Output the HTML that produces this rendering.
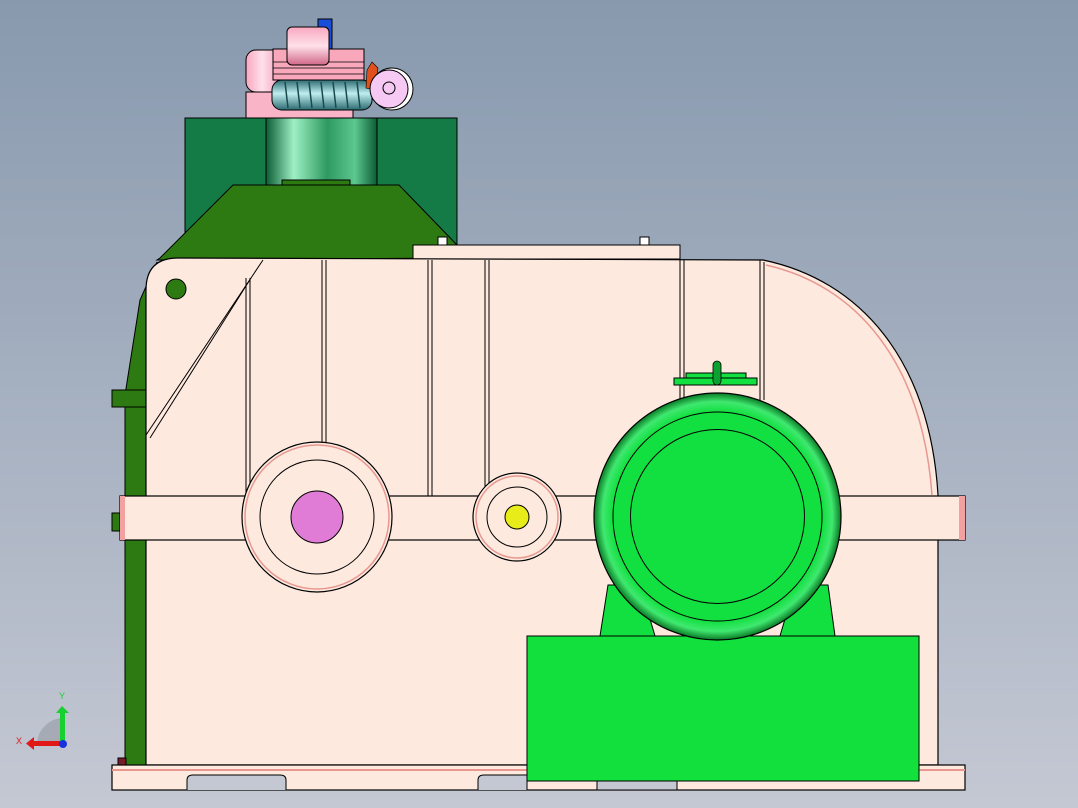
<!DOCTYPE html>
<html><head><meta charset="utf-8"><style>
html,body{margin:0;padding:0;width:1078px;height:808px;overflow:hidden}
svg{display:block}
</style></head><body>
<svg width="1078" height="808" viewBox="0 0 1078 808" xmlns="http://www.w3.org/2000/svg" font-family="Liberation Sans, sans-serif">
<defs>
<linearGradient id="bg" x1="0" y1="0" x2="0" y2="1"><stop offset="0" stop-color="#8899ae"/><stop offset="1" stop-color="#c4c8d3"/></linearGradient>
<linearGradient id="col" x1="0" y1="0" x2="1" y2="0"><stop offset="0" stop-color="#0c5c34"/><stop offset=".25" stop-color="#9ef0c4"/><stop offset=".55" stop-color="#2e9a60"/><stop offset=".8" stop-color="#5cc890"/><stop offset="1" stop-color="#0c5c34"/></linearGradient>
<radialGradient id="mot" cx=".5" cy=".5" r=".5"><stop offset=".85" stop-color="#12e040"/><stop offset=".93" stop-color="#40e870"/><stop offset="1" stop-color="#0a7a25"/></radialGradient>
<linearGradient id="pm" x1="0" y1="0" x2="0" y2="1"><stop offset="0" stop-color="#f9a8c0"/><stop offset=".5" stop-color="#ffe0ea"/><stop offset="1" stop-color="#d06888"/></linearGradient>
<linearGradient id="pmh" x1="0" y1="0" x2="1" y2="0"><stop offset="0" stop-color="#f9a8c0"/><stop offset=".4" stop-color="#ffe0ea"/><stop offset="1" stop-color="#f090b0"/></linearGradient>
<linearGradient id="worm" x1="0" y1="0" x2="0" y2="1"><stop offset="0" stop-color="#2a6a70"/><stop offset=".45" stop-color="#c0eef0"/><stop offset="1" stop-color="#2a6a70"/></linearGradient>
</defs>
<rect width="1078" height="808" fill="url(#bg)"/>

<rect x="185" y="118" width="272" height="130" fill="#147a46" stroke="#000" stroke-width="1"/>
<rect x="266" y="118" width="111" height="70" fill="url(#col)" stroke="#000" stroke-width="1"/>
<rect x="282" y="180" width="68" height="6" fill="#2e7a12" stroke="#000" stroke-width="1"/>
<polygon points="233,185 399,185 457,245 457,258 157,260 160,258" fill="#2e7a12" stroke="#000" stroke-width="1"/>

<polygon points="157,262 146,290 146,765 125,765 125,395 140,300" fill="#2e7a12" stroke="#000" stroke-width="1"/>
<rect x="112" y="390" width="34" height="17" fill="#2e7a12" stroke="#000"/>
<rect x="112" y="513" width="10" height="18" fill="#2e7a12" stroke="#000"/>

<rect x="413" y="245" width="267" height="14" fill="#fde9de" stroke="#000" stroke-width="1"/>
<rect x="438" y="237" width="9" height="8" fill="#fff" stroke="#000"/>
<rect x="640" y="237" width="9" height="8" fill="#fff" stroke="#000"/>

<path d="M146,290 Q146,258 178,258 L763,260 C860,280 930,360 938,495 L938,765 L146,765 Z" fill="#fde9de" stroke="#000" stroke-width="1.2"/>
<path d="M766,265 C855,285 922,360 932,495" fill="none" stroke="#e89890" stroke-width="1.5"/>
<g stroke="#000" stroke-width="1" fill="none">
<line x1="246" y1="278" x2="246" y2="496"/><line x1="250" y1="278" x2="250" y2="496"/>
<line x1="322" y1="260" x2="322" y2="445"/><line x1="326" y1="260" x2="326" y2="445"/>
<line x1="428" y1="260" x2="428" y2="496"/><line x1="432" y1="260" x2="432" y2="496"/>
<line x1="485" y1="260" x2="485" y2="496"/><line x1="489" y1="260" x2="489" y2="496"/>
<line x1="680" y1="260" x2="680" y2="400"/><line x1="684" y1="260" x2="684" y2="400"/>
<line x1="760" y1="260" x2="760" y2="400"/><line x1="764" y1="262" x2="764" y2="400"/>
<line x1="146" y1="435" x2="263" y2="260"/><line x1="150" y1="438" x2="251" y2="278"/>
</g>
<circle cx="176" cy="289" r="10" fill="#2e7a12" stroke="#000"/>

<rect x="120" y="496" width="845" height="44" fill="#fde9de" stroke="#000" stroke-width="1.2"/>
<rect x="120" y="496" width="5" height="44" fill="#f2a0a0"/>
<rect x="959" y="496" width="6" height="44" fill="#f2a0a0"/>

<circle cx="317" cy="517" r="75" fill="#fde9de" stroke="#000" stroke-width="1.2"/>
<circle cx="317" cy="517" r="72" fill="none" stroke="#e89890" stroke-width="1.5"/>
<circle cx="317" cy="517" r="57" fill="none" stroke="#000"/>
<circle cx="317" cy="517" r="26" fill="#e07bd6" stroke="#000"/>
<circle cx="517" cy="517" r="44" fill="#fde9de" stroke="#000" stroke-width="1.2"/>
<circle cx="517" cy="517" r="41" fill="none" stroke="#e89890" stroke-width="1.5"/>
<circle cx="517" cy="517" r="30" fill="none" stroke="#000"/>
<circle cx="517" cy="517" r="12" fill="#e8ec18" stroke="#000"/>

<rect x="112" y="765" width="853" height="25" fill="#fde9de" stroke="#000" stroke-width="1.2"/>
<line x1="112" y1="770" x2="965" y2="770" stroke="#e89890" stroke-width="2"/>
<path d="M187,790 L187,780 Q187,775 193,775 L280,775 Q286,775 286,780 L286,790" fill="#c4c8d3" stroke="#000"/>
<path d="M478,790 L478,780 Q478,775 484,775 L527,775 L527,790" fill="#c4c8d3" stroke="#000"/>
<rect x="597" y="781" width="80" height="9" fill="#c4c8d3" stroke="#000"/>
<rect x="118" y="758" width="8" height="7" fill="#7a1b2a" stroke="#000"/>

<polygon points="600,636 608,585 640,585 655,636" fill="#12e040" stroke="#000"/>
<polygon points="835,636 828,585 795,585 780,636" fill="#12e040" stroke="#000"/>
<rect x="527" y="636" width="392" height="145" fill="#12e03c" stroke="#000" stroke-width="1"/>
<rect x="686" y="373" width="60" height="12" fill="#12e040" stroke="#000"/>
<rect x="674" y="378" width="83" height="7" fill="#12e040" stroke="#000"/>
<rect x="713" y="361" width="8" height="24" rx="4" fill="#0ca030" stroke="#000" stroke-width=".8"/>
<circle cx="717.5" cy="516.5" r="123.5" fill="url(#mot)" stroke="#000" stroke-width="1.2"/>
<circle cx="717.5" cy="516.5" r="104.5" fill="none" stroke="#000"/>
<circle cx="717.5" cy="516.5" r="87" fill="none" stroke="#000"/>

<!-- top small motor -->
<rect x="246" y="92" width="107" height="26" fill="#f9b4c8" stroke="#000"/>
<rect x="246" y="50" width="40" height="42" rx="10" fill="url(#pmh)" stroke="#000"/>
<rect x="318" y="19" width="14" height="30" fill="#1b4ed8" stroke="#000"/>
<rect x="273" y="49" width="91" height="31" fill="#f9a8bc" stroke="#000"/>
<g stroke="#000" stroke-width=".8"><line x1="273" y1="62" x2="364" y2="62"/><line x1="273" y1="68" x2="364" y2="68"/><line x1="273" y1="74" x2="364" y2="74"/></g>
<rect x="287" y="27" width="42" height="38" rx="5" fill="url(#pm)" stroke="#000"/>
<rect x="272" y="80" width="100" height="30" rx="10" fill="url(#worm)" stroke="#000"/>
<g stroke="#1a4a50" stroke-width="1.5">
<line x1="285" y1="82" x2="288" y2="108"/><line x1="297" y1="82" x2="300" y2="108"/><line x1="309" y1="82" x2="312" y2="108"/><line x1="321" y1="82" x2="324" y2="108"/><line x1="333" y1="82" x2="336" y2="108"/><line x1="345" y1="82" x2="348" y2="108"/><line x1="357" y1="82" x2="360" y2="108"/>
</g>
<polygon points="367,70 372,62 378,68 375,90 366,88" fill="#e0501c" stroke="#000" stroke-width=".6"/>
<circle cx="392" cy="89" r="21" fill="#fff" stroke="#000"/>
<circle cx="389" cy="89" r="19" fill="#f6c8f4" stroke="#000"/>
<circle cx="389" cy="88" r="6" fill="none" stroke="#000"/>

<path d="M37,745 A27,27 0 0 1 62,718 L62,745 Z" fill="#9aa0a8" opacity=".7"/>
<rect x="60" y="712" width="5" height="33" fill="#18d030"/>
<polygon points="56,713 62,706 69,713" fill="#18d030"/>
<rect x="34" y="741" width="28" height="5" fill="#e01818"/>
<polygon points="34,737 26,743.5 34,750" fill="#e01818"/>
<circle cx="63" cy="744" r="4" fill="#1830e0"/>
<text x="59" y="699" font-size="9" fill="#18d030">Y</text>
<text x="16" y="744" font-size="9" fill="#e01818">X</text>
</svg>
</body></html>
